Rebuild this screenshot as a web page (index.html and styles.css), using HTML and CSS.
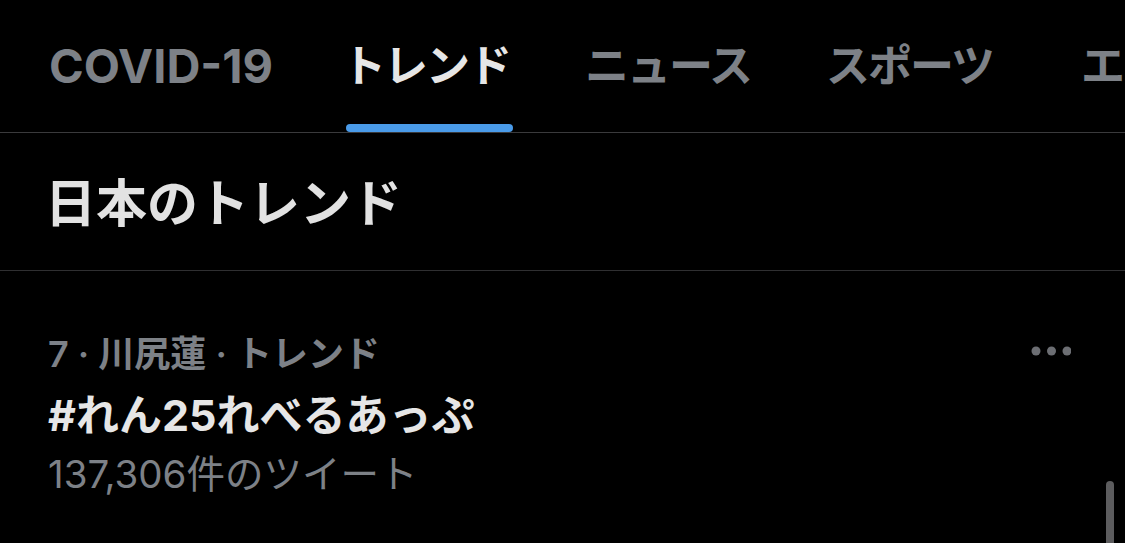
FILE: index.html
```html
<!DOCTYPE html>
<html lang="ja">
<head>
  <meta charset="UTF-8" />
  <meta name="viewport" content="width=device-width, initial-scale=1.0" />
  <title>トレンド</title>
  <link rel="stylesheet" href="styles.css">
</head>
<body>
  <nav class="tabs">
    <div class="tab tab-latin">
      <span class="tab-label">COVID-19</span>
    </div>
    <div class="tab active">
      <span class="tab-label">トレンド</span>
      <span class="tab-bar"></span>
    </div>
    <div class="tab">
      <span class="tab-label">ニュース</span>
    </div>
    <div class="tab tab-wide">
      <span class="tab-label">スポーツ</span>
    </div>
    <div class="tab">
      <span class="tab-label">エンタメ</span>
    </div>
  </nav>

  <section class="section-head">
    <h2>日本のトレンド</h2>
  </section>

  <div class="trend-item">
    <div class="trend-body">
      <div class="trend-meta">7 · 川尻蓮 · トレンド</div>
      <div class="trend-title">#れん25れべるあっぷ</div>
      <div class="trend-count">137,306件のツイート</div>
    </div>
    <svg class="more" width="40" height="10" viewBox="0 0 40 10">
      <circle cx="5" cy="5" r="4.5" />
      <circle cx="20.5" cy="5" r="4.5" />
      <circle cx="36" cy="5" r="4.5" />
    </svg>
  </div>

  <!-- scroll indicator -->
  <div class="scroll-thumb"></div>
</body>
</html>
```

FILE: styles.css
```css
html,
body {
  margin: 0;
  padding: 0;
  height: 543px;
  overflow: hidden;
  background: #000;
}
body {
  font-family: Inter, "Noto Sans CJK JP", sans-serif;
  color: #e4e4e4;
  position: relative;
}
.tabs {
  display: flex;
  height: 133px;
  padding-left: 47px;
  border-bottom: 1px solid #3a3a3c;
  white-space: nowrap;
  overflow: hidden;
  box-sizing: border-box;
}
.tab {
  display: flex;
  flex-direction: column;
  margin-right: 75px;
  flex-shrink: 0;
}
.tab-label {
  padding-top: 42px;
  line-height: 48px;
  font-size: 44px;
  font-weight: 700;
  letter-spacing: -2px;
  color: #7d8187;
}
.tab-latin {
  margin-right: 69px;
}
.tab-latin .tab-label {
  font-size: 47px;
  letter-spacing: 0;
  padding-left: 2px;
}
.tab-wide {
  margin-right: 88px;
}
.tab.active .tab-label {
  color: #e6e6e6;
}
.tab-bar {
  margin: auto -3px 0 4px;
  height: 8px;
  border-radius: 4px;
  background: #4a9be9;
}
.section-head {
  padding: 41px 0 36px 45px;
  border-bottom: 1px solid #2f2f31;
}
.section-head h2 {
  margin: 0;
  font-size: 51px;
  line-height: 60px;
  font-weight: 700;
  color: #e2e2e2;
}
.trend-item {
  display: flex;
  justify-content: space-between;
  align-items: flex-start;
  padding: 62px 54px 0 48px;
}
.trend-meta {
  font-size: 36px;
  line-height: 42px;
  font-weight: 600;
  color: #7d8187;
}
.trend-title {
  margin-top: 16px;
  font-size: 43px;
  line-height: 48px;
  font-weight: 700;
  color: #e6e6e6;
}
.trend-count {
  margin-top: 13px;
  font-size: 38.5px;
  line-height: 44px;
  color: #7d8187;
}
.more {
  margin-top: 13px;
  fill: #6c6e73;
}
.scroll-thumb {
  position: absolute;
  right: 11px;
  top: 481px;
  width: 8px;
  height: 80px;
  border-radius: 4px;
  background: #5c5c5e;
}
```
